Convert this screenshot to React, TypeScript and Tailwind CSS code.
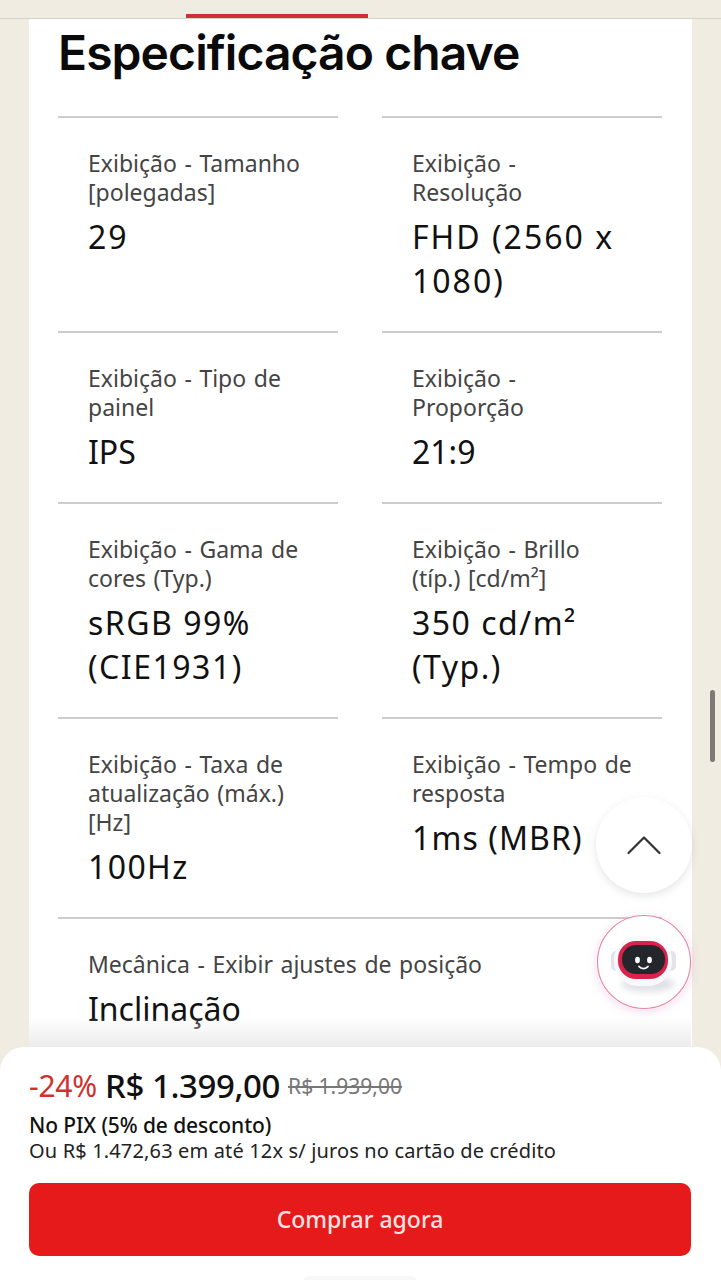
const specs = [
  { label: ["Exibição - Tamanho", "[polegadas]"], value: ["29"], track: "tracking-[2px]" },
  { label: ["Exibição -", "Resolução"], value: ["FHD (2560 x", "1080)"], track: "tracking-[2px]" },
  { label: ["Exibição - Tipo de", "painel"], value: ["IPS"], track: "tracking-normal" },
  { label: ["Exibição -", "Proporção"], value: ["21:9"], track: "tracking-normal" },
  { label: ["Exibição - Gama de", "cores (Typ.)"], value: ["sRGB 99%", "(CIE1931)"], track: "tracking-[1.5px]" },
  { label: ["Exibição - Brillo", "(típ.) [cd/m²]"], value: ["350 cd/m²", "(Typ.)"], track: "tracking-[1.5px]" },
  { label: ["Exibição - Taxa de", "atualização (máx.)", "[Hz]"], value: ["100Hz"], track: "tracking-[1.4px]" },
  { label: ["Exibição - Tempo de", "resposta"], value: ["1ms (MBR)"], track: "tracking-[1.1px]" },
];

function SpecCell({ label, value, track }: { label: string[]; value: string[]; track: string }) {
  return (
    <div className="border-t-2 border-[#cdcdcd] pt-[31px] pb-[28px] pl-[30px]">
      <div className="text-[23px] leading-[29px] text-[#444444] [word-spacing:1.6px]">
        {label.map((line) => (
          <div key={line} className="whitespace-nowrap">{line}</div>
        ))}
      </div>
      <div className={`mt-[8px] text-[32px] leading-[44px] text-[#111111] ${track}`}>
        {value.map((line) => (
          <div key={line} className="whitespace-nowrap">{line}</div>
        ))}
      </div>
    </div>
  );
}

function RobotIcon() {
  return (
    <svg width="96" height="96" viewBox="0 0 96 96" fill="none">
      <defs>
        <linearGradient id="ring" x1="6" y1="30" x2="92" y2="62">
          <stop offset="0" stopColor="#e8829a" />
          <stop offset="0.55" stopColor="#dc9ada" />
          <stop offset="1" stopColor="#9ce6ee" />
        </linearGradient>
        <linearGradient id="visor" x1="24" y1="62" x2="70" y2="30">
          <stop offset="0" stopColor="#e8202c" />
          <stop offset="0.42" stopColor="#d0245a" />
          <stop offset="0.65" stopColor="#a040d8" />
          <stop offset="1" stopColor="#3f6fe0" />
        </linearGradient>
        <linearGradient id="head" x1="48" y1="20" x2="48" y2="76">
          <stop offset="0" stopColor="#f8f9fb" />
          <stop offset="1" stopColor="#dde4ef" />
        </linearGradient>
        <filter id="soft" x="-30%" y="-30%" width="160%" height="160%">
          <feGaussianBlur stdDeviation="3" />
        </filter>
      </defs>
      <circle cx="48" cy="48" r="46.5" fill="white" />
      <circle cx="48" cy="48" r="46.5" stroke="url(#ring)" strokeWidth="1.1" />
      <ellipse cx="52" cy="70" rx="27" ry="8" fill="#c8cad2" opacity="0.55" filter="url(#soft)" />
      <rect x="15" y="37" width="10" height="20" rx="5" fill="#e2e4ea" />
      <rect x="70" y="37" width="10" height="20" rx="5" fill="#e2e4ea" />
      <rect x="18" y="22" width="58" height="50" rx="24" fill="url(#head)" />
      <rect x="22" y="27" width="50" height="38" rx="18" fill="url(#visor)" />
      <rect x="26" y="31" width="43" height="29" rx="14" fill="#25252c" />
      <ellipse cx="41.5" cy="46" rx="2.4" ry="3.2" fill="white" />
      <ellipse cx="53.5" cy="46" rx="2.4" ry="3.2" fill="white" />
      <path d="M43 52.5c2.3 2.8 6.7 2.8 9 0" stroke="white" strokeWidth="1.8" strokeLinecap="round" />
    </svg>
  );
}

export default function App() {
  return (
    <div className="relative h-[1280px] w-[721px] overflow-hidden bg-[#f0ece2] font-['Noto_Sans','Open_Sans',sans-serif]">
      {/* tab strip */}
      <div className="relative h-[19px] border-b border-[#d6d3ca]">
        <div className="absolute left-[186px] top-[14px] h-[4px] w-[182px] bg-[#cf3035]" />
      </div>

      {/* card */}
      <div className="mx-[29px] h-[1261px] bg-white px-[29px]">
        <h1 className="h-[97px] whitespace-nowrap pt-[6px] font-['Inter',sans-serif] text-[48px] font-semibold leading-[56px] tracking-[-0.92px] text-[#0a0a0a]">
          Especificação chave
        </h1>
        <div className="grid grid-cols-[280px_280px] gap-x-[44px]">
          {specs.map((spec) => (
            <SpecCell key={spec.label[0]} label={spec.label} value={spec.value} track={spec.track} />
          ))}
          <div className="col-span-2">
            <SpecCell label={["Mecânica - Exibir ajustes de posição"]} value={["Inclinação"]} track="tracking-normal" />
          </div>
        </div>
      </div>

      {/* scrollbar */}
      <div className="absolute left-[710px] top-[690px] h-[72px] w-[5px] rounded-full bg-[#7c7a72]" />

      {/* back to top */}
      <button className="absolute left-[596px] top-[797px] flex h-[96px] w-[96px] items-center justify-center rounded-full bg-white shadow-[0_3px_8px_rgba(0,0,0,0.1)]">
        <svg width="34" height="20" viewBox="0 0 34 20" fill="none">
          <path d="M1.5 18 17 2.5 32.5 18" stroke="#333333" strokeWidth="2.2" strokeLinecap="round" strokeLinejoin="round" />
        </svg>
      </button>

      {/* chatbot */}
      <div className="absolute left-[596px] top-[914px] h-[96px] w-[96px] rounded-full shadow-[0_2px_8px_rgba(224,112,192,0.25)]">
        <RobotIcon />
      </div>

      {/* fade above sheet */}
      <div className="absolute bottom-[233px] left-[29px] h-[30px] w-[662px] bg-gradient-to-b from-white/0 to-[#ececec]" />

      {/* bottom sheet */}
      <div className="absolute bottom-0 left-0 h-[233px] w-[721px] rounded-t-[24px] bg-white px-[29px] pt-[22px]">
        <div className="flex h-[34px] items-center whitespace-nowrap">
          <span className="text-[30px] leading-[34px] tracking-[-0.25px] text-[#d0312f]">-24%</span>
          <span className="ml-[8px] text-[33px] font-medium leading-[34px] tracking-[-0.4px] text-[#111111]">R$ 1.399,00</span>
          <span className="ml-[8px] text-[21px] leading-[34px] text-[#777777] line-through">R$ 1.939,00</span>
        </div>
        <div className="mt-[9px] whitespace-nowrap text-[21px] font-medium leading-[26px] tracking-[-0.1px] text-[#111111]">No PIX (5% de desconto)</div>
        <div className="whitespace-nowrap text-[20px] leading-[26px] tracking-[0.15px] text-[#222222]">Ou R$ 1.472,63 em até 12x s/ juros no cartão de crédito</div>
        <button className="mt-[19px] flex h-[73px] w-[662px] items-center justify-center rounded-[10px] bg-[#e61a1a] text-[23px] font-medium text-[#fbe3e3]">
          Comprar agora
        </button>
      </div>

      {/* home indicator hint */}
      <div className="absolute bottom-0 left-[304px] h-[4px] w-[112px] rounded-t-full bg-[#f7f7f7]" />
    </div>
  );
}
